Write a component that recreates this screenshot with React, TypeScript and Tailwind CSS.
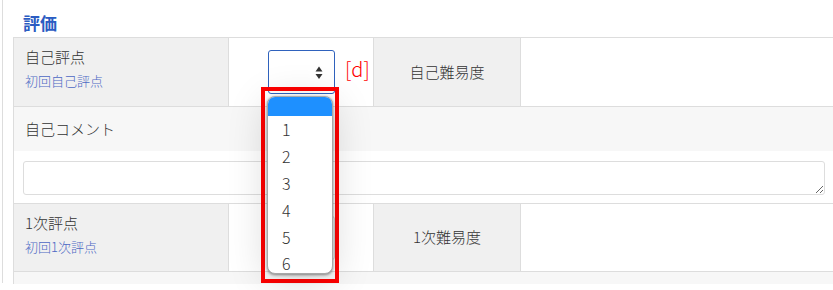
const font = { fontFamily: '"Noto Sans CJK JP", "Noto Sans", sans-serif' };

const UpDown = () => (
  <svg width="8" height="14" viewBox="0 0 8 14" className="absolute right-[11px] top-[15px]">
    <path d="M4 0.5 L7.5 5.5 L0.5 5.5 Z" fill="#333" />
    <path d="M0.5 8 L7.5 8 L4 13 Z" fill="#333" />
  </svg>
);

const Select = ({ active }: { active?: boolean }) => (
  <div
    className={
      "relative w-[67px] h-[44px] rounded-[3px] bg-white border " +
      (active ? "border-[#2f62bd]" : "border-[#d6d6d6]")
    }
  >
    {active && <UpDown />}
  </div>
);

const ScoreRow = ({
  label,
  sub,
  level,
  active,
  h,
}: {
  label: string;
  sub: string;
  level: string;
  active?: boolean;
  h: string;
}) => (
  <div className={"flex border-b border-[#dddddd] " + h}>
    <div className="w-[215px] border-r border-[#dddddd] bg-[#f0f0f0] pl-[11px] pt-[8px]">
      <div className="text-[15px] leading-[22px] font-light text-[#333]">{label}</div>
      <div className="mt-[3px] text-[13px] leading-[20px] font-light text-[#4d68c4]">{sub}</div>
    </div>
    <div className="relative w-[145px] border-r border-[#dddddd] bg-white flex items-center justify-center">
      <Select active={active} />
      {active && (
        <span className="absolute left-[116px] top-[18px] text-[20px] leading-[26px] font-light text-[#ff0000]">[d]</span>
      )}
    </div>
    <div className="w-[147px] border-r border-[#dddddd] bg-[#f0f0f0] flex items-center justify-center text-[15px] font-light text-[#333]">
      {level}
    </div>
    <div className="flex-1 bg-white" />
  </div>
);

export default function App() {
  const options = ["1", "2", "3", "4", "5", "6"];
  return (
    <div className="relative w-[833px] h-[290px] overflow-hidden bg-white" style={font}>
      <div className="ml-[2px] h-[283px] border-l border-[#dddddd] pl-[10px]">
        <div className="h-[37px] pl-[10px] pt-[13px] text-[17px] leading-[20px] font-bold text-[#2b5cc2]">評価</div>
        <div className="w-[840px] border-t border-l border-[#dddddd]">
          <ScoreRow h="h-[69px]" label="自己評点" sub="初回自己評点" level="自己難易度" active />
          <div className="h-[44px] bg-[#f7f7f7] flex items-center pl-[11px] text-[15px] font-light text-[#333]">自己コメント</div>
          <div className="bg-white pl-[9px] pt-[10px] pb-[8px] border-b border-[#dddddd]">
            <textarea className="block w-[802px] h-[34px] rounded-[3px] border border-[#dddddd] bg-white" />
          </div>
          <ScoreRow h="h-[68px]" label="1次評点" sub="初回1次評点" level="1次難易度" />
          <div className="h-[12px] bg-[#f7f7f7]" />
        </div>
      </div>

      <div className="absolute left-[261px] top-[87px] w-[78px] h-[196px] border-[4px] border-[#ff0000]" />
      <div className="absolute left-[267px] top-[96px] w-[66px] h-[178px] overflow-hidden rounded-[8px] border border-[#a8a8a8] bg-white shadow-[0_1px_3px_rgba(0,0,0,0.45),0_6px_40px_rgba(0,0,0,0.16)]">
        <div className="h-[19px] bg-[#1e90ff]" />
        {options.map((o, i) => (
          <div
            key={o}
            className={
              "pl-[14px] text-[16px] leading-[20px] font-light text-[#333] " +
              (i === options.length - 1 ? "h-[22px] pt-[2px]" : "h-[27px] pt-[3px]")
            }
          >
            {o}
          </div>
        ))}
      </div>
    </div>
  );
}
